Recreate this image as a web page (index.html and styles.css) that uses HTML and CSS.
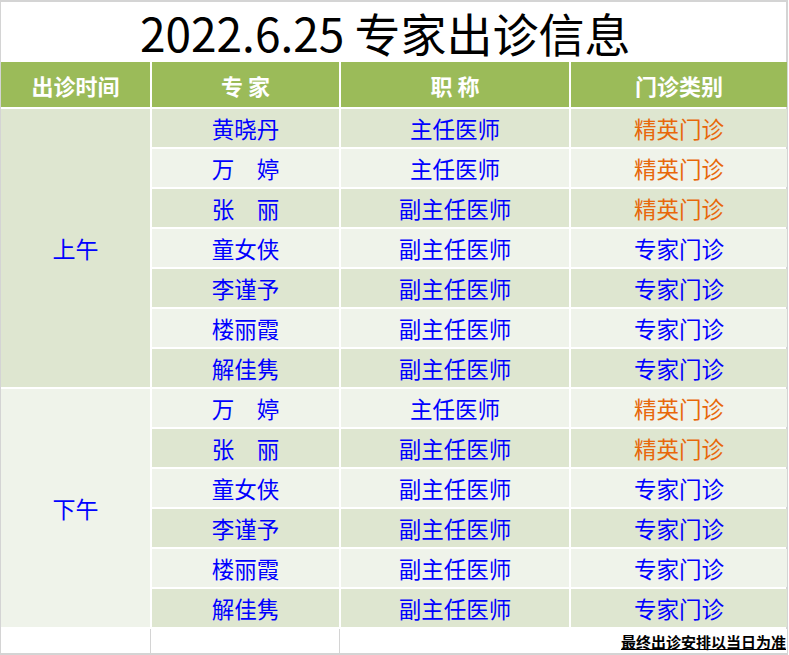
FILE: index.html
```html
<!DOCTYPE html>
<html lang="zh-CN">
<head>
<meta charset="utf-8">
<title>专家出诊信息</title>
<link rel="stylesheet" href="styles.css">
</head>
<body>
<div class="sheet">
  <div class="title"><span>2022.6.25 专家出诊信息</span></div>

  <div class="hd">出诊时间</div>
  <div class="hd">专 家</div>
  <div class="hd">职 称</div>
  <div class="hd">门诊类别</div>

  <div class="period am">上午</div>
  <div class="cell dark">黄晓丹</div><div class="cell dark">主任医师</div><div class="cell dark orange">精英门诊</div>
  <div class="cell light">万　婷</div><div class="cell light">主任医师</div><div class="cell light orange">精英门诊</div>
  <div class="cell dark">张　丽</div><div class="cell dark">副主任医师</div><div class="cell dark orange">精英门诊</div>
  <div class="cell light">童女侠</div><div class="cell light">副主任医师</div><div class="cell light">专家门诊</div>
  <div class="cell dark">李谨予</div><div class="cell dark">副主任医师</div><div class="cell dark">专家门诊</div>
  <div class="cell light">楼丽霞</div><div class="cell light">副主任医师</div><div class="cell light">专家门诊</div>
  <div class="cell dark">解佳隽</div><div class="cell dark">副主任医师</div><div class="cell dark">专家门诊</div>

  <div class="period pm">下午</div>
  <div class="cell light">万　婷</div><div class="cell light">主任医师</div><div class="cell light orange">精英门诊</div>
  <div class="cell dark">张　丽</div><div class="cell dark">副主任医师</div><div class="cell dark orange">精英门诊</div>
  <div class="cell light">童女侠</div><div class="cell light">副主任医师</div><div class="cell light">专家门诊</div>
  <div class="cell dark">李谨予</div><div class="cell dark">副主任医师</div><div class="cell dark">专家门诊</div>
  <div class="cell light">楼丽霞</div><div class="cell light">副主任医师</div><div class="cell light">专家门诊</div>
  <div class="cell dark">解佳隽</div><div class="cell dark">副主任医师</div><div class="cell dark">专家门诊</div>

  <div class="foot line"></div>
  <div class="foot line"></div>
  <div class="foot note"><span>最终出诊安排以当日为准</span></div>
</div>
</body>
</html>
```

FILE: styles.css
```css
html, body {
  margin: 0;
  padding: 0;
  background: #ffffff;
}

body {
  font-family: "Noto Sans CJK SC", "Noto Sans", sans-serif;
}

.sheet {
  width: 785px;
  height: 651px;
  border-top: 2px solid #d4d4d4;
  border-bottom: 2px solid #d4d4d4;
  border-left: 1px solid #d4d4d4;
  border-right: 2px solid #d4d4d4;
  display: grid;
  grid-template-columns: 149px 187px 228px 216px;
  grid-template-rows: 58px 45px repeat(13, 38px) 24px;
  column-gap: 2px;
  row-gap: 2px;
  background: #ffffff;
}

.title {
  grid-column: 1 / 5;
  display: flex;
  align-items: center;
  padding-left: 139px;
  padding-top: 2px;
}

.title span {
  font-size: 46px;
  line-height: 1;
  color: #000000;
  white-space: nowrap;
}

.hd {
  background: #9bbb59;
  color: #ffffff;
  font-weight: bold;
  font-size: 22px;
  display: flex;
  align-items: center;
  justify-content: center;
}

.period {
  grid-column: 1;
  color: #0000ff;
  font-size: 23px;
  display: flex;
  align-items: center;
  justify-content: center;
}

.am {
  grid-row: 3 / span 7;
  background: #dee6d0;
}

.pm {
  grid-row: 10 / span 6;
  background: #eff3ea;
}

.cell {
  color: #0000ff;
  font-size: 22.5px;
  display: flex;
  align-items: center;
  justify-content: center;
  white-space: nowrap;
}

.dark {
  background: #dee6d0;
}

.light {
  background: #eff3ea;
}

.orange {
  color: #e8680a;
}

.foot {
  background: #ffffff;
}

.line {
  box-shadow: 1px 0 0 #d4d4d4;
}

.note {
  grid-column: 3 / 5;
  display: flex;
  align-items: center;
  justify-content: flex-end;
  padding-right: 1px;
}

.note span {
  font-size: 15px;
  font-weight: bold;
  color: #000000;
  text-decoration: underline;
  text-underline-offset: 1px;
  line-height: 1;
}
```
